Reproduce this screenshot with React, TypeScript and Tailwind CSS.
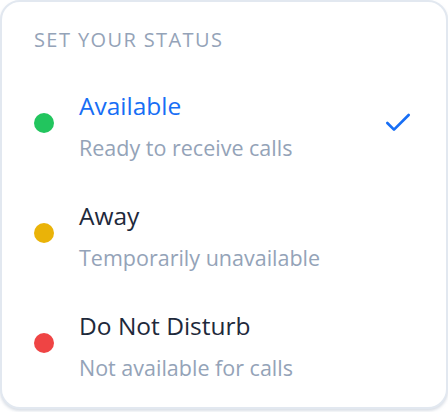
import { Check } from 'lucide-react';

const statuses = [
  { id: 'available', label: 'Available', note: 'Ready to receive calls', dot: 'bg-[#22c55e]' },
  { id: 'away', label: 'Away', note: 'Temporarily unavailable', dot: 'bg-[#eab308]' },
  { id: 'dnd', label: 'Do Not Disturb', note: 'Not available for calls', dot: 'bg-[#ef4444]' },
];

export default function App() {
  const selected = 'available';

  return (
    <div className="w-[448px] h-[412px] bg-white" style={{ fontFamily: '"Open Sans", "Noto Sans", sans-serif' }}>
      <div className="h-[409px] rounded-[20px] border-2 border-[#e2e8f0] bg-white px-8 pt-[24px] shadow-[0_2px_3px_rgba(148,163,184,0.35)]">
        <h2 className="text-[20px] leading-7 tracking-[0.07em] uppercase text-[#94a3b8]">Set your status</h2>

        <div className="mt-[14px] flex flex-col">
          {statuses.map((s) => {
            const active = s.id === selected;
            return (
              <div key={s.id} className="flex items-start h-[110px]">
                <div className={`mt-[45px] w-5 h-5 rounded-full ${s.dot}`} />
                <div className="ml-[25px] pt-[22px] flex-1">
                  <div className={`text-[24.5px] leading-8 ${active ? 'text-[#176ef5]' : 'text-[#1e293b]'}`}>{s.label}</div>
                  <div className="mt-3 text-[21.5px] leading-7 text-[#94a3b8]">{s.note}</div>
                </div>
                {active && <Check className="mt-[39px] w-8 h-8 text-[#176ef5]" strokeWidth={2} />}
              </div>
            );
          })}
        </div>
      </div>
    </div>
  );
}
